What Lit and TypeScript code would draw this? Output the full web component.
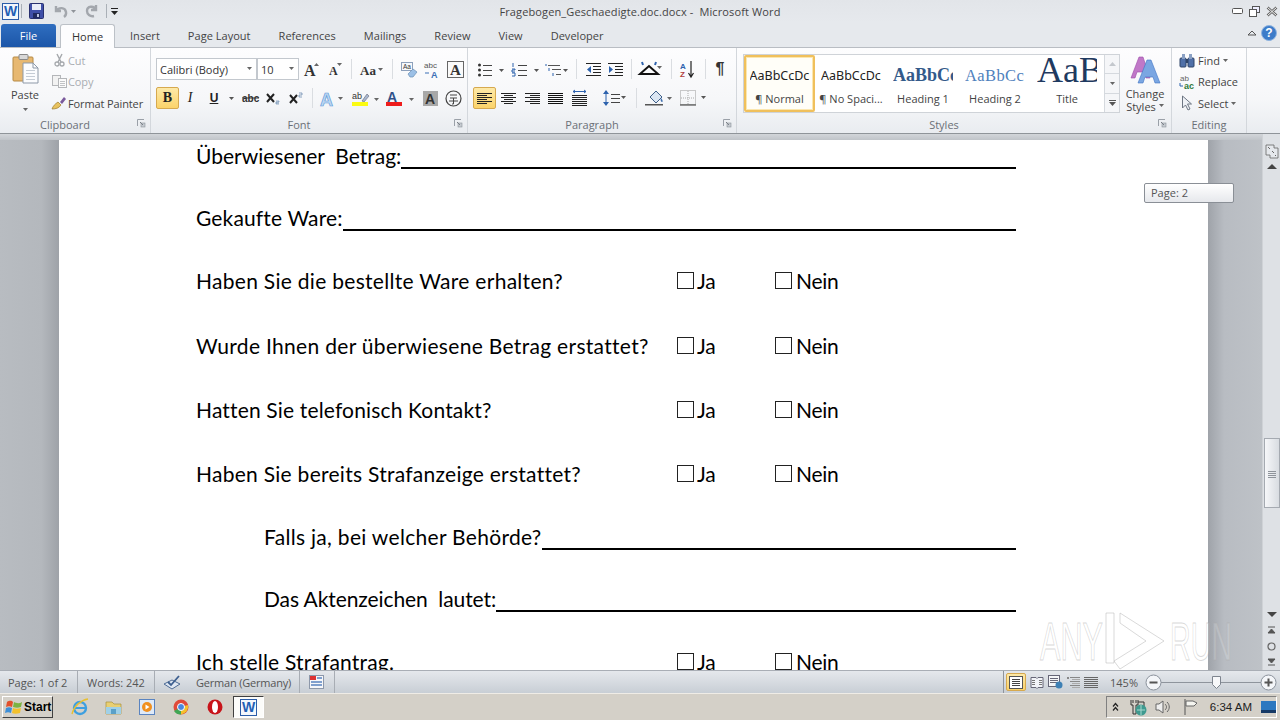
import { LitElement, html, css, svg } from "lit";
import { customElement } from "lit/decorators.js";

const ic = (w: number, h: number, body: unknown) =>
  html`<svg width=${w} height=${h} viewBox="0 0 ${w} ${h}" fill="none">${body}</svg>`;
const arr = (x: number, y: number, c = "#555") => svg`<path d="M${x} ${y}h5l-2.500 3z" fill=${c}/>`;
const lines = (x: number, ys: number[], w: number, c = "#333") =>
  svg`${ys.map((y) => svg`<rect x=${x} y=${y} width=${w} height="1" fill=${c}/>`)}`;

const I = {
  save: ic(15, 16, svg`<rect x=".5" y=".5" width="14" height="15" rx="1" fill="#3f4fa8" stroke="#28306f"/><rect x="3" y="1" width="9" height="6" fill="#e8ecf8"/><rect x="4" y="10" width="7" height="5" fill="#202a60"/><rect x="8" y="11" width="2" height="3" fill="#b8c0e0"/>`),
  undo: ic(24, 14, svg`<path d="M3 2v5h5M3 7c3-4 9-4 10 1 .4 2-.6 4-2 5" stroke="#a3a7ad" stroke-width="2.400"/>${arr(18, 6, "#8f9399")}`),
  redo: ic(13, 14, svg`<path d="M11 1v5H6M11 6C9 1 2 2 2 7c0 3 3 6 7 5" stroke="#a3a7ad" stroke-width="2.400"/>`),
  cust: ic(9, 12, svg`<rect x="1" y="3" width="7" height="1" fill="#222"/><path d="M1 6h7l-3.500 4z" fill="#222"/>`),
  help: ic(16, 16, svg`<circle cx="8" cy="8" r="7.500" fill="#3d7cc9" stroke="#8fb4e0"/>`),
  collapse: ic(10, 8, svg`<path d="M1 6l4-4 4 4z" stroke="#555"/>`),
  min: ic(11, 6, svg`<rect x=".5" y=".5" width="10" height="5" rx="1" fill="#fff" stroke="#555"/>`),
  restore: ic(11, 11, svg`<rect x="3.500" y=".5" width="7" height="6" fill="#eef" stroke="#555"/><rect x=".5" y="3.500" width="7" height="7" fill="#fff" stroke="#555"/>`),
  close: ic(12, 11, svg`<path d="M1.500 1.500l9 8M10.500 1.500l-9 8" stroke="#666" stroke-width="2.600"/><path d="M1.500 1.500l9 8M10.500 1.500l-9 8" stroke="#f2f2f2" stroke-width="1"/>`),
  paste: ic(27, 30, svg`<rect x="1" y="3" width="20" height="24" rx="1" fill="#e7b871" stroke="#b68a45"/><rect x="7" y=".5" width="9" height="5" rx="1" fill="#d8d8d8" stroke="#888"/><path d="M11 9h10l5 5v15H11z" fill="#fbfcfe" stroke="#8d99a8"/><path d="M21 9v5h5" stroke="#8d99a8"/>${lines(14, [16, 19, 22, 25], 9, "#c5ccd5")}`),
  cut: ic(11, 13, svg`<path d="M3 0l4 8M8 0L4 8" stroke="#a5a8ac" stroke-width="1.400"/><circle cx="3" cy="10" r="2" stroke="#a5a8ac" stroke-width="1.300"/><circle cx="8" cy="10" r="2" stroke="#a5a8ac" stroke-width="1.300"/>`),
  copy: ic(15, 13, svg`<rect x=".5" y=".5" width="8" height="10" fill="#f2f2f2" stroke="#b4b6b9"/><rect x="6.500" y="3.500" width="8" height="9" fill="#fbfbfb" stroke="#b4b6b9"/>${lines(8, [6, 8, 10], 5, "#c0c2c5")}`),
  painter: ic(16, 14, svg`<path d="M1 13c1-3 3-5 6-7l3 3c-2 3-5 4-9 4z" fill="#e8c25e" stroke="#9c7b2a" stroke-width=".7"/><path d="M9 6l4-5 2 2-4 5z" fill="#7a5a9c"/>`),
  launcher: ic(9, 9, svg`<path d="M.5 7V.5H7" stroke="#9aa0a8"/><rect x="4" y="4" width="4" height="4" fill="#c5cad0" stroke="#8d939a" stroke-width=".6"/><path d="M3 3l3 3" stroke="#7a8088"/>`),
  grow: ic(16, 15, svg`<text x="0" y="14" font-family="Liberation Serif" font-weight="700" font-size="16" fill="#333">A</text><path d="M10 4l2.500-3 2.500 3z" fill="#666"/>`),
  shrink: ic(14, 14, svg`<text x="0" y="13" font-family="Liberation Serif" font-weight="700" font-size="12" fill="#333">A</text><path d="M8 1h5l-2.500 3z" fill="#666"/>`),
  aa: ic(24, 13, svg`<text x="0" y="12" font-family="Liberation Serif" font-weight="700" font-size="13" fill="#333">Aa</text>${arr(18, 5, "#666")}`),
  clearAb: ic(17, 17, svg`<rect x=".5" y="1.500" width="11" height="8" fill="#f6f8fb" stroke="#8da0bb"/><text x="2" y="8" font-family="Liberation Sans" font-size="6.500" fill="#333">Aa</text><path d="M7 13l5-5 4 3-4 5H9z" fill="#9cc0e6" stroke="#6a8fb5" stroke-width=".7"/>`),
  abcA: ic(17, 17, svg`<text x="0" y="7" font-family="Liberation Sans" font-size="8" fill="#555">abc</text><text x="7" y="17" font-family="Liberation Sans" font-weight="700" font-size="9" fill="#3b6fb5">A</text><path d="M1 12h4" stroke="#3b6fb5"/>`),
  boxA: ic(17, 17, svg`<rect x=".5" y=".5" width="16" height="16" fill="#fafafa" stroke="#666"/><text x="3" y="14" font-family="Liberation Serif" font-weight="700" font-size="15" fill="#333">A</text>`),
  bold: html`<span class="fb b">B</span>`,
  ital: html`<span class="fb i">I</span>`,
  under: html`<span class="fb u">U</span>`,
  strike: ic(17, 12, svg`<text x="0" y="10" font-family="Liberation Sans" font-weight="700" font-size="10" fill="#333">abc</text><path d="M0 6h17" stroke="#333"/>`),
  sub: ic(14, 13, svg`<path d="M1 2l7 8M8 2l-7 8" stroke="#222" stroke-width="2"/><path d="M10 11h3M10 9h3v1h-3v2h3" stroke="#5b7fa8" stroke-width=".6"/>`),
  sup: ic(14, 13, svg`<path d="M1 3l7 8M8 3l-7 8" stroke="#222" stroke-width="2"/><path d="M10 1h3v2h-3v2h3" stroke="#5b7fa8" stroke-width=".7"/>`),
  effects: ic(24, 17, svg`<text x="0" y="16" font-family="Liberation Sans" font-weight="700" font-size="18" fill="#bdd7f3" stroke="#5f9bd8" stroke-width=".7">A</text>${arr(18, 7, "#666")}`),
  hilite: ic(28, 17, svg`<text x="0" y="9" font-family="Liberation Sans" font-size="9" fill="#333">ab</text><path d="M10 11l5-7 2 2-5 6z" fill="#a8b8d0" stroke="#667" stroke-width=".6"/><rect y="12" width="16" height="4" fill="#fbfb12"/>${arr(22, 8, "#666")}`),
  color: ic(28, 17, svg`<text x="1" y="12" font-family="Liberation Sans" font-weight="700" font-size="14" fill="#30518a">A</text><rect y="12" width="16" height="4" fill="#ee1c1c"/>${arr(23, 8, "#666")}`),
  shade: ic(15, 15, svg`<rect width="15" height="15" fill="#a8a8a8"/><text x="2" y="13" font-family="Liberation Sans" font-weight="700" font-size="14" fill="#333">A</text>`),
  circ: ic(17, 17, svg`<circle cx="8.500" cy="8.500" r="7.500" stroke="#444" stroke-width="1.200"/><path d="M5 5h7M5 8h7M8.500 8v6M7 14h1.500M4 11h9" stroke="#444"/>`),
  bullets: ic(26, 13, svg`<circle cx="1.500" cy="2" r="1.500" fill="#333"/><circle cx="1.500" cy="7" r="1.500" fill="#333"/><circle cx="1.500" cy="12" r="1.500" fill="#333"/>${lines(5, [2, 7, 12], 9, "#444")}${arr(21, 6)}`),
  numbers: ic(27, 13, svg`<path d="M1 0v4M0 6h3v1H0v2h3M0 10h3v3H0" stroke="#2d62ad"/>${lines(6, [2, 7, 12], 9, "#444")}${arr(22, 6)}`),
  multi: ic(24, 13, svg`<path d="M1 1v2M4 5v3M8 10v3" stroke="#2d62ad"/>${lines(3, [2], 12, "#555")}${lines(7, [6], 9, "#555")}${lines(11, [11], 5, "#555")}${arr(18, 6)}`),
  outdent: ic(15, 13, svg`${lines(0, [0, 12], 15, "#222")}${lines(7, [3, 6, 9], 8, "#222")}<path d="M5 3L1 6.500 5 10z" fill="#2d62ad"/>`),
  indent: ic(15, 13, svg`${lines(0, [0, 12], 15, "#222")}${lines(7, [3, 6, 9], 8, "#222")}<path d="M1 3l4 3.500L1 10z" fill="#2d62ad"/>`),
  asian: ic(24, 14, svg`<path d="M2 12L11 4l9 8H2z" stroke="#111" stroke-width="2"/><path d="M4 0l1 3M18 0l-1 3" stroke="#2d62ad" stroke-width="2"/>${arr(19, 4, "#666")}`),
  sort: ic(15, 17, svg`<text x="0" y="8" font-family="Liberation Sans" font-weight="700" font-size="8" fill="#2d62ad">A</text><text x="0" y="16" font-family="Liberation Sans" font-weight="700" font-size="8" fill="#b04040">Z</text><path d="M11 0v15M8.500 12l2.500 4 2.500-4" stroke="#222" stroke-width="1.200"/>`),
  left: ic(15, 11, lines(0, [0, 2, 4, 6, 8, 10], 15, "#111")),
  alignL: ic(15, 11, svg`${lines(0, [0, 4, 8], 15, "#222")}${lines(0, [2, 6, 10], 10, "#222")}`),
  alignC: ic(15, 11, svg`${lines(0, [0, 4, 8], 15, "#222")}${lines(3, [2, 6, 10], 9, "#222")}`),
  alignR: ic(15, 11, svg`${lines(0, [0, 4, 8], 15, "#222")}${lines(5, [2, 6, 10], 10, "#222")}`),
  dist: ic(15, 16, svg`<path d="M1 1.500h13M3 0L1 1.500 3 3M12 0l2 1.500L12 3" stroke="#2d62ad"/>${lines(0, [5, 7, 9, 11, 13, 15], 15, "#222")}`),
  spacing: ic(23, 16, svg`<path d="M3 1v14" stroke="#2d62ad"/><path d="M0 4l3-4 3 4zM0 12l3 4 3-4z" fill="#2d62ad"/>${lines(8, [4, 8, 12], 9, "#444")}${arr(18, 6)}`),
  fill: ic(27, 17, svg`<path d="M5 7l6-6 6 6-6 6z" fill="#dbe6f3" stroke="#3f5f88"/><path d="M16 8c2 2 2 4 1 4s-2-2-1-4z" fill="#3f6fb0"/><rect y="14" width="18" height="1.500" fill="#555"/>${arr(22, 7, "#666")}`),
  borders: ic(26, 16, svg`<rect x=".5" y=".5" width="15" height="14" stroke="#999" stroke-dasharray="1 1"/><path d="M8 1v14M1 8h14" stroke="#aaa" stroke-dasharray="1 1"/><path d="M0 15h16" stroke="#333"/>${arr(21, 6)}`),
  changeStyles: ic(31, 28, svg`<path d="M1 22L9 1h4l7 21h-4l-2-6H7l-2 6z" fill="#c078c8" stroke="#9c4aa8" stroke-width=".6"/><path d="M8 27L17 4h4l9 23h-5l-2-6h-8l-2 6z" fill="#7aa6e2" stroke="#3f74c4" stroke-width=".6"/>`),
  find: ic(16, 13, svg`<rect x="1" y="4" width="6" height="9" rx="1" fill="#5070a8" stroke="#2e4468"/><rect x="9" y="4" width="6" height="9" rx="1" fill="#5070a8" stroke="#2e4468"/><rect x="3" y="0" width="3" height="5" fill="#8aa0c4"/><rect x="10" y="0" width="3" height="5" fill="#8aa0c4"/><rect x="7" y="5" width="2" height="4" fill="#2e4468"/>`),
  replace: ic(17, 16, svg`<text x="1" y="7" font-family="Liberation Sans" font-size="8" fill="#666">ab</text><text x="5" y="15" font-family="Liberation Sans" font-weight="700" font-size="9" fill="#2f7a3a">ac</text><path d="M1 9v3h3" stroke="#2d62ad"/>`),
  select: ic(12, 16, svg`<path d="M1.500 1v12l3-3 2.500 5 2-1-2.500-5h4z" fill="#eef1f6" stroke="#6d7683"/>`),
  ruler: ic(14, 16, svg`<path d="M1 2h8v3h4v10H5v-3H1z" fill="#e5e8ec" stroke="#666" stroke-width=".8"/><path d="M3 4l2 2M7 8l2 2M10 12l1 1" stroke="#666"/>`),
  up: ic(10, 6, svg`<path d="M0 6l5-5 5 5z" fill="#444"/>`),
  gup: ic(7, 4, svg`<path d="M0 4l3.500-4L7 4z" fill="#c4c8cd"/>`),
  down: ic(10, 6, svg`<path d="M0 0l5 5 5-5z" fill="#444"/>`),
  prev: ic(9, 8, svg`<path d="M1 1h7M1 7l3.500-4L8 7z" stroke="#555" fill="#555"/>`),
  browse: ic(9, 9, svg`<circle cx="4.500" cy="4.500" r="3.500" stroke="#666" stroke-width="1.200"/>`),
  next: ic(9, 8, svg`<path d="M1 7h7M1 1l3.500 4L8 1z" stroke="#555" fill="#555"/>`),
  proof: ic(18, 15, svg`<path d="M1 9l8 5 8-5-8-4z" fill="#dfe7f2" stroke="#4d6b95"/><path d="M5 7l3 3 8-9" stroke="#3d5f8f" stroke-width="1.800"/>`),
  macro: ic(15, 14, svg`<rect x=".5" y=".5" width="14" height="13" fill="#f6f7fa" stroke="#8d98aa"/><rect x="1" y="1" width="6" height="4" fill="#d33"/><path d="M8 3h5M2 7h11M2 10h11" stroke="#5a84c0" stroke-width="1.400"/>`),
  vPrint: ic(14, 13, svg`<rect x=".5" y=".5" width="13" height="12" fill="#fff" stroke="#555"/>${lines(3, [3, 5, 7, 9], 8, "#444")}`),
  vRead: ic(14, 13, svg`<path d="M1 1.500h5l1 1 1-1h5v10H8l-1 1-1-1H1z" fill="#f2f4f8" stroke="#667"/>${lines(2, [4, 6, 8], 3, "#777")}${lines(9, [4, 6, 8], 3, "#777")}`),
  vWeb: ic(15, 14, svg`<rect x=".5" y=".5" width="11" height="11" fill="#f5f6f8" stroke="#667"/>${lines(2, [3, 5, 7], 8, "#667")}<circle cx="11" cy="10" r="3.500" fill="#3d80b5"/>`),
  vOut: ic(13, 11, svg`${lines(3, [0, 4, 8], 10, "#888")}${lines(5, [2, 6, 10], 8, "#aaa")}<path d="M0 0h2v2H0z" fill="#888"/>`),
  vDraft: ic(14, 11, lines(0, [0, 2, 4, 6, 8, 10], 14, "#666")),
  zMinus: ic(17, 17, svg`<circle cx="8.500" cy="8.500" r="7.500" fill="#f4f6f9" stroke="#8b929c"/><rect x="4.500" y="7.500" width="8" height="2" fill="#555"/>`),
  zPlus: ic(17, 17, svg`<circle cx="8.500" cy="8.500" r="7.500" fill="#f4f6f9" stroke="#8b929c"/><rect x="4.500" y="7.500" width="8" height="2" fill="#555"/><rect x="7.500" y="4.500" width="2" height="8" fill="#555"/>`),
  thumb: ic(9, 13, svg`<path d="M.5.5h8v8L4.500 12.500.5 8.500z" fill="#f7f8fa" stroke="#7e858f"/>`),
  winlogo: ic(18, 17, svg`<path d="M2 3c3-2 5-1 6 0L7 8C5 7 3 7 1 8z" fill="#e2502c"/><path d="M9 3c2 1 5 2 8 0l-1 5c-3 1-5 1-8 0z" fill="#7cb342"/><path d="M1 9c2-1 4-1 6 0l-1 5c-2-1-4-1-6 0z" fill="#3d8fd8"/><path d="M8 9c2 1 5 1 8 0l-1 5c-3 1-6 1-8 0z" fill="#f3c12c"/>`),
  ie: ic(18, 18, svg`<circle cx="9" cy="10" r="6" stroke="#3d9fe0" stroke-width="2.400"/><path d="M4 10h10" stroke="#3d9fe0" stroke-width="2"/><path d="M1 16C3 8 10 2 17 1" stroke="#e8c030" stroke-width="1.400"/>`),
  explorer: ic(17, 16, svg`<path d="M1 3h6l2 2h7v10H1z" fill="#e9cf72" stroke="#a88f3e" stroke-width=".7"/><path d="M1 8h15v7H1z" fill="#9fd0e8"/><rect x="6" y="10" width="5" height="5" fill="#5aa0c8"/>`),
  media: ic(16, 16, svg`<rect x=".5" y=".5" width="15" height="15" fill="#dfeaf8" stroke="#5a84c0"/><circle cx="8" cy="8" r="5" fill="#f09020"/><path d="M6.500 5.500l4 2.500-4 2.500z" fill="#fff"/>`),
  chrome: ic(16, 16, svg`<circle cx="8" cy="8" r="7.500" fill="#e04a3a"/><path d="M8 8L1 12a8 8 0 0 0 7 3.500z" fill="#3fa654"/><path d="M8 8l7-2a8 8 0 0 1-7 9.500z" fill="#f3c12c"/><circle cx="8" cy="8" r="3.500" fill="#4a87e0" stroke="#fff"/>`),
  opera: ic(16, 16, svg`<ellipse cx="8" cy="8" rx="7.500" ry="7.500" fill="#c8141a"/><ellipse cx="8" cy="8" rx="3" ry="6" fill="#fff"/>`),
  tChev: ic(7, 8, svg`<path d="M1 3.500l2.500-3 2.500 3M1 7.500l2.500-3 2.500 3" stroke="#222" stroke-width="1.200"/>`),
  tNet: ic(17, 17, svg`<path d="M1 1v5h2v9h3V6h2V1M3 1v3M6 1v3" stroke="#333"/><path d="M8 3h6v4" stroke="#333"/><circle cx="11" cy="11" r="5.500" fill="#3f9a8f"/><path d="M7 11h8M11 6v10" stroke="#a9d8d0"/>`),
  tSound: ic(16, 14, svg`<path d="M5 4l4-3v12l-4-3H2V4z" stroke="#666" fill="#eee"/><path d="M11 4c2 2 2 4 0 6M13 2c3 3 3 7 0 10" stroke="#666"/>`),
  tFlag: ic(16, 16, svg`<path d="M2 0v16" stroke="#555"/><path d="M3 2h7l4 2-3 3H3z" fill="#f5f5f0" stroke="#666"/>`),
  tDesk: ic(15, 12, svg`<rect width="15" height="12" fill="#2c78c0"/><rect y="9" width="15" height="3" fill="#163a66"/>`),
};

type Tool = { w: number; c?: unknown; on?: boolean; sep?: boolean };
const ROW_FONT1: Tool[] = [
  { w: 26, c: I.grow }, { w: 22, c: I.shrink }, { w: 9, sep: true }, { w: 31, c: I.aa }, { w: 10, sep: true },
  { w: 24, c: I.clearAb }, { w: 22, c: I.abcA }, { w: 24, c: I.boxA },
];
const ROW_FONT2: Tool[] = [
  { w: 23, c: I.bold, on: true }, { w: 22, c: I.ital }, { w: 26, c: I.under }, { w: 8, c: ic(5, 3, arr(0, 0)) },
  { w: 30, c: I.strike }, { w: 16, c: I.sub }, { w: 30, c: I.sup }, { w: 2, sep: true },
  { w: 38, c: I.effects }, { w: 30, c: I.hilite }, { w: 38, c: I.color }, { w: 22, c: I.shade }, { w: 24, c: I.circ },
];
const ROW_PARA1: Tool[] = [
  { w: 36, c: I.bullets }, { w: 33, c: I.numbers }, { w: 30, c: I.multi }, { w: 8, sep: true }, { w: 27, c: I.outdent },
  { w: 17, c: I.indent }, { w: 14, sep: true }, { w: 24, c: I.asian }, { w: 18, sep: true }, { w: 15, c: I.sort },
  { w: 20, sep: true }, { w: 10, c: html`<span class="pil">¶</span>` },
];
const ROW_PARA2: Tool[] = [
  { w: 23, c: I.alignL, on: true }, { w: 24, c: I.alignC }, { w: 24, c: I.alignR }, { w: 22, c: I.left }, { w: 27, c: I.dist },
  { w: 43, c: I.spacing }, { w: 1, sep: true }, { w: 42, c: I.fill }, { w: 28, c: I.borders },
];

const DOC = [
  { t: "Überwiesener  Betrag:", line: true, sp: 0, gap: 0 },
  { t: "Gekaufte Ware:", line: true, sp: 0.14, gap: 30 },
  { t: "Haben Sie die bestellte Ware erhalten?", gap: 31, sp: 0.29 },
  { t: "Wurde Ihnen der überwiesene Betrag erstattet?", gap: 33, sp: 0.31 },
  { t: "Hatten Sie telefonisch Kontakt?", gap: 32, sp: 0.16 },
  { t: "Haben Sie bereits Strafanzeige erstattet?", gap: 32, sp: 0.27 },
  { t: "Falls ja, bei welcher Behörde?", line: true, ind: true, gap: 31, sp: 0.3 },
  { t: "Das Aktenzeichen  lautet:", line: true, ind: true, gap: 30, sp: -0.08 },
  { t: "Ich stelle Strafantrag.", gap: 31, sp: 0.2 },
];

const GALLERY = [
  { s: "AaBbCcDc", l: "¶ Normal", cls: "g-n", on: true },
  { s: "AaBbCcDc", l: "¶ No Spaci...", cls: "g-n" },
  { s: "AaBbCc", l: "Heading 1", cls: "g-h1" },
  { s: "AaBbCc", l: "Heading 2", cls: "g-h2" },
  { s: "AaB", l: "Title", cls: "g-t" },
];

@customElement("app-root")
export class AppRoot extends LitElement {
  static styles = css`
    :host { display: block; width: 1280px; height: 720px; overflow: hidden; font-family: "Open Sans", sans-serif; font-size: 11px; color: #444; position: relative; }
    svg { display: block; flex: none; overflow: visible; }
    .app { display: flex; flex-direction: column; height: 720px; }

    .title { height: 22px; display: grid; grid-template-columns: 1fr auto 1fr; align-items: center; background: linear-gradient(#e2e5e9, #e6e9ed); flex: none; }
    .qat { display: flex; align-items: center; padding-left: 2px; }
    .wicon { width: 15px; height: 15px; border: 1px solid #2a5ca8; background: #f3f7fc; color: #1f5fb5; font: 700 14px/15px "Liberation Sans", sans-serif; text-align: center; flex: none; }
    .qsep { width: 1px; height: 14px; background: #aab0b7; flex: none; }
    .ttl { text-align: center; font-size: 11px; color: #444; letter-spacing: .12px; white-space: pre; }
    .win { display: flex; align-items: center; justify-content: flex-end; padding-right: 2px; gap: 6px; }

    .tabs { height: 25px; display: flex; align-items: flex-end; background: #e6e9ed; flex: none; padding-left: 1px; }
    .tab { height: 23px; padding: 0 14px; display: flex; align-items: center; color: #444; letter-spacing: .03px; box-sizing: border-box; white-space: nowrap; }
    .file { width: 55px; background: linear-gradient(#2f6ec0, #1c56a8); color: #fff; border-radius: 3px 3px 0 0; justify-content: center; padding: 0; margin-right: 4px; }
    .home { width: 55px; background: #fdfdfe; border: 1px solid #bcc1c7; border-bottom: 0; border-radius: 3px 3px 0 0; justify-content: center; padding: 0; color: #333; position: relative; top: 1px; height: 24px; margin-right: 1px; }
    .hlp { margin-left: auto; display: flex; align-items: center; gap: 4px; padding: 0 3px 3px 0; align-self: center; }
    .q { position: relative; }
    .qm { position: absolute; inset: 0; color: #fff; font: 700 12px/16px "Liberation Sans", sans-serif; text-align: center; }

    .ribbon { height: 87px; flex: none; display: flex; background: linear-gradient(#fdfdfe 0, #f6f7f9 60%, #e9ecf0 100%); border-top: 1px solid #b9bdc3; border-bottom: 1px solid #8f9499; box-sizing: border-box; }
    .group { display: flex; flex-direction: column; border-right: 1px solid #d3d7dc; box-sizing: border-box; flex: none; height: 85px; position: relative; }
    .body { flex: 1; min-height: 0; display: flex; }
    .glabel { height: 19px; display: flex; align-items: center; justify-content: center; color: #6b7077; position: relative; box-sizing: border-box; padding-top: 2px; }
    .glabel.lc { padding-right: 20px; }
    .pad { margin-left: -5px; }
    .launch { position: absolute; right: 4px; top: 5px; }

    .clip { width: 151px; }
    .pastecol { width: 50px; display: flex; flex-direction: column; align-items: center; padding-top: 6px; color: #444; }
    .pl { margin-top: 3px; }
    .smalls { display: flex; flex-direction: column; padding-top: 2px; }
    .sm { height: 22px; display: flex; align-items: center; gap: 0; white-space: nowrap; letter-spacing: -.12px; }
    .ico { width: 18px; display: flex; justify-content: center; flex: none; }
    .dis { color: #a9adb2; }

    .font { width: 317px; padding: 10px 0 0 5px; }
    .para { width: 269px; padding: 10px 0 0 5px; }
    .stack { display: flex; flex-direction: column; gap: 7px; }
    .row { display: flex; height: 22px; align-items: center; }
    .t { display: flex; align-items: center; justify-content: center; height: 22px; flex: none; position: relative; }
    .t.on { background: linear-gradient(#fde9a8, #fbd36a); border: 1px solid #d6a94f; border-radius: 2px; box-sizing: border-box; }
    .t .bar { width: 1px; height: 20px; background: #dadde1; }
    .fb { font: 700 14px "Liberation Serif", serif; color: #222; }
    .fb.i { font-style: italic; font-weight: 400; }
    .fb.u { text-decoration: underline; font-family: "Liberation Sans", sans-serif; font-size: 12px; }
    .pil { font: 700 16px "Liberation Sans", sans-serif; color: #333; }
    .combo { height: 22px; border: 1px solid #c3c8ce; box-sizing: border-box; background: #fff; display: flex; align-items: center; padding-left: 3px; color: #333; position: relative; flex: none; }
    .combo svg { position: absolute; right: 4px; top: 8px; }

    .styles { width: 435px; }
    .sbody { display: flex; flex: 1; padding: 6px 0 0 6px; }
    .gal { width: 377px; height: 59px; border: 1px solid #cfd3d8; background: #fff; box-sizing: border-box; display: flex; position: relative; }
    .tile { width: 72px; height: 57px; display: flex; flex-direction: column; align-items: center; box-sizing: border-box; flex: none; overflow: hidden; }
    .tile.on { width: 71px; border: 2px solid #f0c05c; background: #fffef8; box-shadow: inset 0 0 0 1px #fbe7b0; border-radius: 2px; }
    .sw { height: 37px; padding-top: 2px; display: flex; align-items: center; justify-content: flex-start; overflow: hidden; width: 60px; white-space: nowrap; color: #222; }
    .tile.on .sw { padding-top: 0; }
    .tl { color: #444; white-space: nowrap; font-size: 11px; margin-top: -3px; }
    .g-n { font: 12.500px "Noto Sans", sans-serif; }
    .g-h1 { font: 700 18px "Liberation Serif", serif; color: #335a8a; }
    .g-h2 { font: 16.500px "Liberation Serif", serif; color: #4f81bd; letter-spacing: .4px; }
    .g-t { font: 36px "Liberation Serif", serif; color: #1f3a60; align-items: flex-start; line-height: 31px; padding-top: 0; height: 39px; }
    .scr { position: absolute; right: 0; top: 0; width: 14px; height: 57px; display: flex; flex-direction: column; border-left: 1px solid #d5d9de; background: #f5f6f8; }
    .scr div { flex: 1; display: flex; align-items: center; justify-content: center; border-bottom: 1px solid #d5d9de; }
    .scr div:last-child { border: 0; }
    .chg { width: 50px; display: flex; flex-direction: column; align-items: center; padding-top: 2px; flex: none; line-height: 13px; color: #444; text-align: center; }
    .chg svg:first-child { margin-bottom: 3px; }
    .cl { display: flex; align-items: center; gap: 3px; }

    .edit { width: 75px; }
    .edbody { padding: 0 0 0 7px; }
    .edbody .sm { gap: 3px; letter-spacing: 0; }
    .edbody .ico { width: 16px; }

    .strip { height: 6px; flex: none; background: linear-gradient(#d2d5d9, #c0c4c9); position: absolute; left: 0; right: 18px; top: 134px; z-index: 2; }
    .docwrap { flex: 1; min-height: 0; display: flex; position: relative; }
    .gl { width: 59px; background: linear-gradient(90deg, #b8bcc1 0, #b4b8bd 70%, #9ea2a8 100%); flex: none; }
    .page { width: 1149px; background: #fff; flex: none; overflow: hidden; padding: 5px 0 0 137px; box-sizing: border-box; }
    .gr { width: 54px; background: linear-gradient(90deg, #9fa3a9 0, #b8bcc2 30%, #bec2c7 100%); flex: none; }
    .doc-row { width: 820px; height: 32px; display: flex; align-items: center; font-family: Lato, sans-serif; font-size: 21px; color: #000; white-space: pre; box-sizing: border-box; }
    .doc-row.ind { padding-left: 68px; }
    .lbl { flex: none; }
    .ln { flex: 1; height: 2px; background: #000; align-self: flex-end; margin-bottom: 2px; }
    .q-l { width: 481px; flex: none; }
    .cb { display: flex; align-items: center; width: 98px; flex: none; letter-spacing: -.3px; }
    .box { width: 15px; height: 15px; border: 1px solid #222; margin-right: 3px; flex: none; }
    .cb2 .box { margin-right: 4px; }

    .sb { width: 18px; flex: none; background: #dee1e5; display: flex; flex-direction: column; align-items: center; border-left: 1px solid #cfd2d6; box-sizing: border-box; position: relative; }
    .sb .ruler { margin-top: 9px; }
    .sb .up { margin-top: 4px; }
    .thumb { position: absolute; left: 1px; right: 0; top: 304px; height: 70px; background: linear-gradient(90deg, #f6f7f9, #d8dce1); border: 1px solid #a5aab1; box-sizing: border-box; }
    .grip { position: absolute; left: 3px; right: 3px; top: 32px; height: 7px; background: repeating-linear-gradient(#8e939a 0 1px, transparent 1px 2px); }
    .bot { position: absolute; bottom: 4px; left: 0; right: 0; display: flex; flex-direction: column; align-items: center; }
    .bot .dn { margin-bottom: 8px; }

    .tip { position: absolute; left: 1144px; top: 49px; width: 90px; height: 20px; box-sizing: border-box; background: linear-gradient(#fff, #e6e8ec); border: 1px solid #8a8f96; border-radius: 2px; font-size: 11px; line-height: 18px; padding-left: 6px; color: #555; z-index: 3; }
    .wm { position: absolute; left: 1036px; top: 473px; z-index: 3; pointer-events: none; }

    .status { height: 23px; flex: none; display: flex; align-items: center; background: linear-gradient(#e5e8ec, #c8ced5); border-top: 1px solid #a9aeb5; box-sizing: border-box; color: #555; }
    .st { height: 100%; display: flex; align-items: center; border-right: 1px solid #a8adb4; box-sizing: border-box; flex: none; }
    .lang { letter-spacing: -.2px; }
    .vw { margin-left: auto; display: flex; align-items: center; height: 100%; border-left: 1px solid #8f949b; box-sizing: border-box; }
    .vb { width: 18px; height: 100%; display: flex; align-items: center; justify-content: center; flex: none; }
    .vb.on { width: 20px; height: 18px; margin: 0 2px 0 2px; background: linear-gradient(#fde9a8, #fbd36a); border: 1px solid #d6a94f; box-sizing: border-box; border-radius: 2px; }
    .pct { width: 40px; text-align: center; margin: 0 1px 0 4px; }
    .slider { width: 100px; height: 1px; background: #8e949c; margin: 0 -1px; position: relative; flex: none; }
    .slider svg { position: absolute; left: 51px; top: -6px; }
    .vw > svg:last-child { margin-right: 3px; }

    .task { height: 27px; flex: none; background: #d4d0c8; border-top: 1px solid #efece6; box-sizing: border-box; display: flex; align-items: center; font-family: "Liberation Sans", sans-serif; color: #111; }
    .start { width: 51px; height: 22px; margin-left: 2px; box-sizing: border-box; display: flex; align-items: center; gap: 1px; padding-left: 2px; font-weight: 700; font-size: 12px; border: 1px solid; border-color: #fff #404040 #404040 #fff; background: #d4d0c8; color: #000; flex: none; }
    .tb { display: flex; justify-content: center; flex: none; }
    .wbtn { width: 31px; height: 22px; margin-left: 10px; box-sizing: border-box; display: flex; align-items: center; justify-content: center; background: #fcfcfa; border: 1px solid; border-color: #404040 #fff #fff #404040; flex: none; }
    .tray { margin-left: auto; margin-right: 3px; width: 171px; height: 22px; box-sizing: border-box; border: 1px solid; border-color: #808080 #fff #fff #808080; display: flex; align-items: center; flex: none; padding-left: 5px; font-size: 11.500px; }
    .clock { color: #222; margin: 0 9px 0 11px; white-space: nowrap; }
  `;

  private tools(list: Tool[]) {
    return list.map((t) => html`<div class="t ${t.on ? "on" : ""}" style="width:${t.w}px">${t.sep ? html`<div class="bar"></div>` : t.c}</div>`);
  }

  render() {
    const dd = ic(5, 3, arr(0, 0, "#666"));
    return html`
      <div class="app">
        <div class="title">
          <div class="qat">
            <div class="wicon">W</div>
            <div class="qsep" style="margin:0 7px 0 2px"></div>
            ${I.save}
            <div style="width:9px"></div>${I.undo}
            <div style="width:8px"></div>${I.redo}
            <div style="width:8px"></div><div class="qsep"></div>
            <div style="width:3px"></div>${I.cust}
          </div>
          <div class="ttl">Fragebogen_Geschaedigte.doc.docx -  Microsoft Word</div>
          <div class="win">${I.min}${I.restore}${I.close}</div>
        </div>
        <div class="tabs">
          <div class="tab file">File</div>
          <div class="tab home">Home</div>
          ${["Insert", "Page Layout", "References", "Mailings", "Review", "View", "Developer"].map((t) => html`<div class="tab">${t}</div>`)}
          <div class="hlp">${I.collapse}<div class="q">${I.help}<div class="qm">?</div></div></div>
        </div>
        <div class="ribbon">
          <div class="group clip">
            <div class="body">
              <div class="pastecol">${I.paste}<div class="pl">Paste</div><div style="margin-top:6px">${dd}</div></div>
              <div class="smalls">
                <div class="sm dis"><span class="ico">${I.cut}</span>Cut</div>
                <div class="sm dis"><span class="ico">${I.copy}</span>Copy</div>
                <div class="sm"><span class="ico">${I.painter}</span>Format Painter</div>
              </div>
            </div>
            <div class="glabel lc">Clipboard<span class="launch">${I.launcher}</span></div>
          </div>
          <div class="group font">
            <div class="body stack">
              <div class="row">
                <div class="combo" style="width:101px">Calibri (Body)${dd}</div>
                <div class="combo" style="width:42px">10${dd}</div>
                ${this.tools(ROW_FONT1)}
              </div>
              <div class="row">${this.tools(ROW_FONT2)}</div>
            </div>
            <div class="glabel lc pad">Font<span class="launch">${I.launcher}</span></div>
          </div>
          <div class="group para">
            <div class="body stack">
              <div class="row">${this.tools(ROW_PARA1)}</div>
              <div class="row">${this.tools(ROW_PARA2)}</div>
            </div>
            <div class="glabel lc pad">Paragraph<span class="launch">${I.launcher}</span></div>
          </div>
          <div class="group styles">
            <div class="sbody">
              <div class="gal">
                ${GALLERY.map((g) => html`<div class="tile ${g.on ? "on" : ""}"><div class="sw ${g.cls}">${g.s}</div><div class="tl">${g.l}</div></div>`)}
                <div class="scr"><div>${I.gup}</div><div>${dd}</div><div>${ic(7, 6, svg`<rect width="7" height="1" fill="#555"/><path d="M0 2h7L3.500 6z" fill="#555"/>`)}</div></div>
              </div>
              <div class="chg">${I.changeStyles}<div>Change</div><div class="cl">Styles ${dd}</div></div>
            </div>
            <div class="glabel lc">Styles<span class="launch">${I.launcher}</span></div>
          </div>
          <div class="group edit">
            <div class="body edbody">
              <div class="smalls">
                <div class="sm"><span class="ico">${I.find}</span>Find ${dd}</div>
                <div class="sm"><span class="ico">${I.replace}</span>Replace</div>
                <div class="sm"><span class="ico">${I.select}</span>Select ${dd}</div>
              </div>
            </div>
            <div class="glabel">Editing</div>
          </div>
        </div>
        <div class="strip"></div>
        <div class="docwrap">
          <div class="gl"></div>
          <div class="page">
            ${DOC.map((r) => html`
              <div class="doc-row ${r.ind ? "ind" : ""}" style="margin-top:${r.gap}px">
                ${r.line
                  ? html`<span class="lbl" style="letter-spacing:${r.sp}px">${r.t}</span><span class="ln"></span>`
                  : html`<span class="q-l" style="letter-spacing:${r.sp}px">${r.t}</span>
                      <span class="cb"><span class="box"></span>Ja</span>
                      <span class="cb cb2"><span class="box"></span>Nein</span>`}
              </div>`)}
          </div>
          <div class="gr"></div>
          <div class="sb">
            <div class="ruler">${I.ruler}</div>
            <div class="up">${I.up}</div>
            <div class="thumb"><div class="grip"></div></div>
            <div class="bot">
              <div class="dn">${I.down}</div>
              <div style="height:16px">${I.prev}</div>
              <div style="height:16px">${I.browse}</div>
              <div style="height:8px">${I.next}</div>
            </div>
          </div>
          <div class="tip">Page: 2</div>
          <svg class="wm" width="200" height="66" viewBox="0 0 200 66">
            <g fill="rgba(255,255,255,.18)" stroke="rgba(170,170,170,.45)" stroke-width="1" font-family="Liberation Sans" font-size="54">
              <text x="4" y="53" textLength="63" lengthAdjust="spacingAndGlyphs">ANY</text>
              <text x="134" y="53" textLength="62" lengthAdjust="spacingAndGlyphs">RUN</text>
            </g>
            <path d="M70 6h8v50h-8zM84 6l44 28-44 28-6-8 32-20-26-18z" fill="rgba(255,255,255,.2)" stroke="rgba(170,170,170,.45)"/>
          </svg>
        </div>
        <div class="status">
          <div class="st" style="width:78px;padding-left:8px">Page: 1 of 2</div>
          <div class="st" style="width:77px;padding-left:9px">Words: 242</div>
          <div class="st" style="width:145px;padding-left:8px;gap:15px">${I.proof}<span class="lang">German (Germany)</span></div>
          <div class="st" style="width:35px;padding-left:9px">${I.macro}</div>
          <div class="vw">
            <div class="vb on">${I.vPrint}</div>
            <div class="vb">${I.vRead}</div>
            <div class="vb">${I.vWeb}</div>
            <div class="vb">${I.vOut}</div>
            <div class="vb">${I.vDraft}</div>
            <div class="pct">145%</div>
            ${I.zMinus}
            <div class="slider">${I.thumb}</div>
            ${I.zPlus}
          </div>
        </div>
        <div class="task">
          <div class="start">${I.winlogo}Start</div>
          <div class="tb" style="width:18px;margin-left:18px">${I.ie}</div>
          <div class="tb" style="width:17px;margin-left:16px">${I.explorer}</div>
          <div class="tb" style="width:16px;margin-left:17px">${I.media}</div>
          <div class="tb" style="width:16px;margin-left:18px">${I.chrome}</div>
          <div class="tb" style="width:16px;margin-left:18px">${I.opera}</div>
          <div class="wbtn"><div class="wicon">W</div></div>
          <div class="tray">
            ${I.tChev}<div style="width:11px"></div>${I.tNet}<div style="width:8px"></div>${I.tSound}<div style="width:13px"></div>${I.tFlag}
            <div class="clock">6:34 AM</div>${I.tDesk}
          </div>
        </div>
      </div>
    `;
  }
}
